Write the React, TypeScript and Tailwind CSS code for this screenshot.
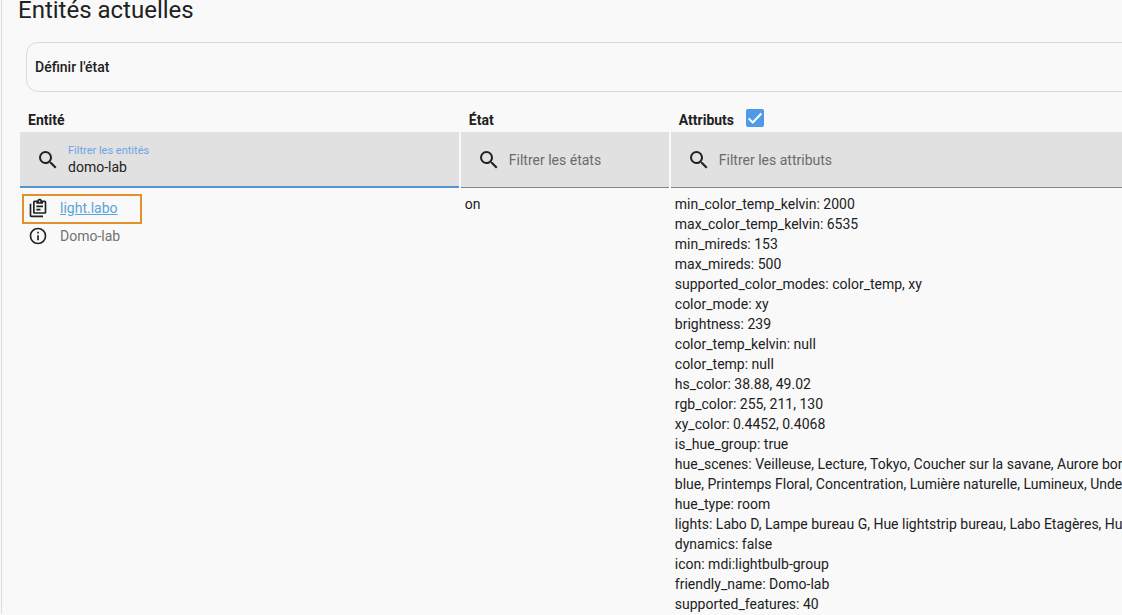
import React from 'react';

const attributes = [
  'min_color_temp_kelvin: 2000',
  'max_color_temp_kelvin: 6535',
  'min_mireds: 153',
  'max_mireds: 500',
  'supported_color_modes: color_temp, xy',
  'color_mode: xy',
  'brightness: 239',
  'color_temp_kelvin: null',
  'color_temp: null',
  'hs_color: 38.88, 49.02',
  'rgb_color: 255, 211, 130',
  'xy_color: 0.4452, 0.4068',
  'is_hue_group: true',
  'hue_scenes: Veilleuse, Lecture, Tokyo, Coucher sur la savane, Aurore bor',
  'blue, Printemps Floral, Concentration, Lumière naturelle, Lumineux, Unde',
  'hue_type: room',
  'lights: Labo D, Lampe bureau G, Hue lightstrip bureau, Labo Etagères, Hu',
  'dynamics: false',
  'icon: mdi:lightbulb-group',
  'friendly_name: Domo-lab',
  'supported_features: 40',
];

const icons = {
  magnify:
    'M9.5,3A6.5,6.5 0 0,1 16,9.5C16,11.11 15.41,12.59 14.44,13.73L14.71,14H15.5L20.5,19L19,20.5L14,15.5V14.71L13.73,14.44C12.59,15.41 11.11,16 9.5,16A6.5,6.5 0 0,1 3,9.5A6.5,6.5 0 0,1 9.5,3M9.5,5C7,5 5,7 5,9.5C5,12 7,14 9.5,14C12,14 14,12 14,9.5C14,7 12,5 9.5,5Z',
  clipboard:
    'M4 7V21H18V23H4C2.9 23 2 22.1 2 21V7H4M20 3C21.1 3 22 3.9 22 5V17C22 18.1 21.1 19 20 19H8C6.9 19 6 18.1 6 17V5C6 3.9 6.9 3 8 3H11.18C11.6 1.84 12.7 1 14 1C15.3 1 16.4 1.84 16.82 3H20M14 3C13.45 3 13 3.45 13 4C13 4.55 13.45 5 14 5C14.55 5 15 4.55 15 4C15 3.45 14.55 3 14 3M10 7V5H8V17H20V5H18V7M15 15H10V13H15M18 11H10V9H18V11Z',
  info: 'M11,9H13V7H11M12,20C7.59,20 4,16.41 4,12C4,7.59 7.59,4 12,4C16.41,4 20,7.59 20,12C20,16.41 16.41,20 12,20M12,2A10,10 0 0,0 2,12A10,10 0 0,0 12,22A10,10 0 0,0 22,12A10,10 0 0,0 12,2M11,17H13V11H11V17Z',
};

const Icon: React.FC<{ path: string; className: string }> = ({ path, className }) => (
  <svg viewBox="0 0 24 24" fill="currentColor" aria-hidden="true" className={`shrink-0 ${className}`}>
    <path d={path} />
  </svg>
);

interface FilterFieldProps {
  id: string;
  label: string;
  defaultValue?: string;
}

const FilterField: React.FC<FilterFieldProps> = ({ id, label, defaultValue }) => {
  const filled = Boolean(defaultValue);

  return (
    <div
      className={`flex h-14 items-center gap-2 bg-[#e1e1e1] pl-4 ${
        filled ? 'border-b-2 border-[#5294d1] pt-0.5' : 'border-b border-[#858585]'
      }`}
    >
      <Icon path={icons.magnify} className="size-6" />
      <div className="flex min-w-0 grow flex-col">
        <label htmlFor={id} className={filled ? 'text-[11px] leading-3.5 text-[#6ba6e0]' : 'sr-only'}>
          {label}
        </label>
        <input
          id={id}
          type="text"
          defaultValue={defaultValue}
          placeholder={filled ? undefined : label}
          className="h-4.5 w-full bg-transparent text-sm leading-4.5 outline-none placeholder:text-[#6b6b6b]"
        />
      </div>
    </div>
  );
};

const App: React.FC = () => {
  return (
    <div className="min-h-screen overflow-hidden bg-[#f9f9f9] pl-px font-['Roboto',sans-serif] text-sm leading-5 text-[#212121]">
      <main className="min-h-screen border-l border-[#dedede] pl-4">
        <h1 className="-mt-1.5 text-2xl leading-8 font-normal">Entités actuelles</h1>

        <div className="mt-4 -mr-6 ml-2">
          <button
            type="button"
            className="block h-[50px] w-full rounded-xl border border-[#dadada] px-2 text-left font-medium"
          >
            Définir l'état
          </button>
        </div>

        <div className="mt-4 pl-0.5">
          <table className="w-full table-fixed border-collapse text-left">
            <thead>
              <tr className="h-6 align-top">
                <th className="w-[40%] px-2 pt-0.5 font-bold">Entité</th>
                <th className="w-[210px] px-2 pt-0.5 font-bold">État</th>
                <th className="px-2 font-bold">
                  <div className="flex items-start gap-3">
                    <label htmlFor="show-attributes" className="pt-0.5">
                      Attributs
                    </label>
                    <span className="grid pt-px">
                      <input
                        id="show-attributes"
                        type="checkbox"
                        defaultChecked
                        className="col-start-1 row-start-1 size-[18px] appearance-none rounded-xs bg-[#4d9be6]"
                      />
                      <svg viewBox="0 0 24 24" className="pointer-events-none col-start-1 row-start-1 size-[18px]" aria-hidden="true">
                        <path d="M3.5 12.5 9 18 20.5 6" fill="none" stroke="white" strokeWidth="2.6" />
                      </svg>
                    </span>
                  </div>
                </th>
              </tr>
              <tr>
                <th className="pr-0.5 font-normal">
                  <FilterField id="filter-entities" label="Filtrer les entités" defaultValue="domo-lab" />
                </th>
                <th className="pr-0.5 font-normal">
                  <FilterField id="filter-states" label="Filtrer les états" />
                </th>
                <th className="font-normal">
                  <FilterField id="filter-attributes" label="Filtrer les attributs" />
                </th>
              </tr>
            </thead>
            <tbody>
              <tr className="align-top">
                <td className="px-0.5 pt-1.5">
                  <div className="flex h-[30px] w-30 items-start gap-3 border-2 border-[#e0912b] pt-0.5 pl-1">
                    <button type="button" aria-label="Copier">
                      <Icon path={icons.clipboard} className="size-5" />
                    </button>
                    <a href="#light.labo" className="text-[#5ba3d6] underline">
                      light.labo
                    </a>
                  </div>
                  <div className="mt-0.5 flex items-center gap-3 pl-1.5">
                    <button type="button" aria-label="Informations">
                      <Icon path={icons.info} className="size-5" />
                    </button>
                    <span className="text-[#727272]">Domo-lab</span>
                  </div>
                </td>
                <td className="px-1 pt-1.5">on</td>
                <td className="pt-1.5 pl-1 whitespace-nowrap">
                  {attributes.map((line) => (
                    <div key={line}>{line}</div>
                  ))}
                </td>
              </tr>
            </tbody>
          </table>
        </div>
      </main>
    </div>
  );
};

export default App;
